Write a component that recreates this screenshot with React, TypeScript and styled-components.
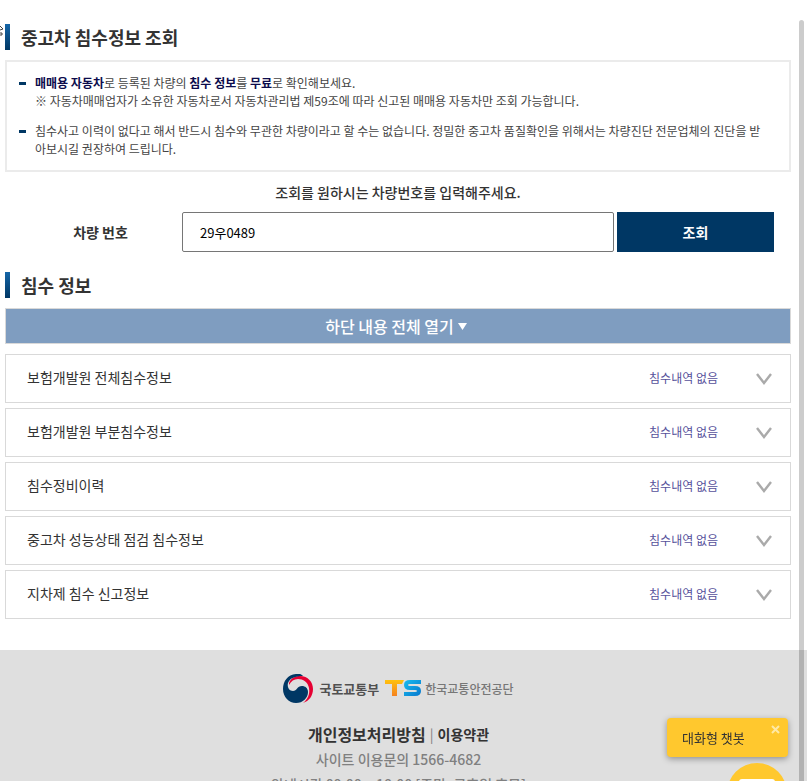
import React, { useState } from 'react';
import styled, { createGlobalStyle } from 'styled-components';

const GlobalStyle = createGlobalStyle`
  * { box-sizing: border-box; }
  html, body, #root { height: 100%; }
  body {
    margin: 0;
    overflow: hidden;
    background: #fff;
    color: #333;
    font-family: "Noto Sans CJK KR", "Noto Sans", sans-serif;
    font-size: 14px;
  }
  button, input { font-family: inherit; }
  h2, p, ul { margin: 0; padding: 0; }
  ul { list-style: none; }
`;

const Page = styled.div`
  height: 100vh;
  overflow: hidden auto;
  scrollbar-width: none;
`;

const Main = styled.main`
  padding: 24px 16px 31px 5px;
`;

const SectionTitle = styled.h2`
  display: flex;
  align-items: center;
  gap: 11px;
  height: 26px;
  font-size: 18px;
  font-weight: 700;
  line-height: 26px;

  &::before {
    content: '';
    width: 5px;
    height: 26px;
    background: linear-gradient(#1566a8, #003764);
  }
`;

const Notice = styled.ul`
  display: flex;
  flex-direction: column;
  gap: 12px;
  margin-top: 10px;
  padding: 12px 20px 12px 12px;
  border: 2px solid #ebebeb;
`;

const NoticeItem = styled.li`
  display: flex;
  gap: 9px;
  color: #444;
  font-size: 12px;
  line-height: 18px;
  word-break: break-all;

  &::before {
    content: '';
    flex: none;
    width: 7px;
    height: 3px;
    margin-top: 8px;
    background: #003764;
  }

  strong {
    color: #0c0c4c;
    font-weight: 700;
  }
`;

const Prompt = styled.p`
  margin-top: 10px;
  font-weight: 500;
  line-height: 20px;
  text-align: center;
`;

const SearchForm = styled.form`
  display: grid;
  grid-template-columns: 174fr 432fr 157fr;
  column-gap: 3px;
  align-items: stretch;
  margin: 10px 17px 20px 0;
  height: 40px;
`;

const SearchLabel = styled.label`
  padding-left: 17px;
  font-weight: 700;
  line-height: 40px;
  text-align: center;
`;

const PlateInput = styled.input`
  min-width: 0;
  padding: 0 17px;
  border: 1px solid #767676;
  border-radius: 2px;
  background: #fff;
  color: #000;
  font-size: 13px;
`;

const SearchButton = styled.button`
  padding: 0;
  border: 0;
  background: #003764;
  color: #fff;
  font-size: 14px;
  font-weight: 700;
`;

const ToggleAll = styled.button`
  display: flex;
  align-items: center;
  justify-content: center;
  gap: 4px;
  width: 100%;
  height: 36px;
  margin: 10px 0;
  padding: 0 4px 0 0;
  border: 1px solid #d9d9d9;
  background: #7f9dc0;
  color: #fff;
  font-size: 16px;
  font-weight: 500;
`;

const HistoryList = styled.ul`
  display: flex;
  flex-direction: column;
  gap: 5px;
`;

const HistoryButton = styled.button`
  display: flex;
  align-items: center;
  width: 100%;
  height: 49px;
  padding: 0 17px 0 21px;
  border: 1px solid #d9d9d9;
  background: #fff;
  color: #333;
  font-size: 14px;
  text-align: left;
`;

const HistoryName = styled.span`
  flex: 1;
  padding-bottom: 4px;
`;

const HistoryStatus = styled.span`
  margin-right: 37px;
  padding-bottom: 2px;
  color: #56519b;
  font-size: 12px;
`;

const HistoryDetail = styled.p`
  padding: 12px 21px;
  border: 1px solid #d9d9d9;
  border-top: 0;
  font-size: 12px;
`;

const Footer = styled.footer`
  display: flex;
  flex-direction: column;
  align-items: center;
  padding: 23px 10px 40px 0;
  background: #dfdfdf;
  color: #808080;
`;

const Logos = styled.div`
  display: flex;
  align-items: center;
  gap: 6px;
  height: 31px;
`;

const Logo = styled.div<{ $main?: boolean }>`
  display: flex;
  align-items: center;
  gap: ${(p) => (p.$main ? 6 : 4)}px;
  color: ${(p) => (p.$main ? '#505050' : '#777')};
  font-size: ${(p) => (p.$main ? 13 : 12)}px;
  font-weight: ${(p) => (p.$main ? 700 : 500)};
`;

const Policies = styled.nav`
  display: flex;
  align-items: center;
  gap: 4px;
  margin-top: 17px;
  line-height: 26px;
`;

const PolicyLink = styled.a<{ $large?: boolean }>`
  color: #333;
  font-size: ${(p) => (p.$large ? 16 : 14)}px;
  font-weight: 700;
  text-decoration: none;
`;

const FooterText = styled.p`
  line-height: 25px;
  font-weight: 500;
`;

const ScrollThumb = styled.div`
  position: fixed;
  top: 20px;
  right: 3px;
  bottom: 0;
  width: 5px;
  border-radius: 3px 3px 0 0;
  background: rgba(0, 0, 0, 0.2);
`;

const ChatTip = styled.div`
  position: fixed;
  right: 19px;
  bottom: 24px;
  display: flex;
  align-items: center;
  width: 121px;
  height: 39px;
  padding-left: 15px;
  border-radius: 4px;
  background: #ffc82e;
  box-shadow: 0 2px 6px rgba(0, 0, 0, 0.35);
  color: #333;
  font-size: 13px;
`;

const ChatClose = styled.button`
  position: absolute;
  top: 6px;
  right: 6px;
  display: flex;
  padding: 0;
  border: 0;
  background: none;
`;

const ChatLauncher = styled.button`
  position: fixed;
  right: 20px;
  bottom: -42px;
  display: flex;
  justify-content: center;
  width: 60px;
  height: 60px;
  padding: 16px 0 0;
  border: 0;
  border-radius: 50%;
  background: #ffc82e;
`;

const Pointer = styled.svg`
  position: fixed;
  top: 24px;
  left: 0;
`;

const histories = [
  '보험개발원 전체침수정보',
  '보험개발원 부분침수정보',
  '침수정비이력',
  '중고차 성능상태 점검 침수정보',
  '지차제 침수 신고정보',
];

const GovernmentMark = () => (
  <svg width="30" height="30" viewBox="0 0 30 30" aria-hidden="true">
    <path d="M6 9C8 4 12 2 17 2C25 2 30 8 30 15C30 22 26 27 20 29C25 25 27 20 26 14C25 8 20 5 15 5C11 5 8 7 6 11Z" fill="#e60033" />
    <path d="M17 0C6-1 0 6 0 15C0 23 6 29 13 29C20 29 25 24 25 18C25 14 22 12 19 12C14 12 14 17 10 17C6 17 4 13 5 9C7 4 12 2 20 2C19 1 18 0 17 0Z" fill="#003764" />
  </svg>
);

const SafetyMark = () => (
  <svg width="36" height="17" viewBox="0 0 36 17" aria-hidden="true">
    <defs>
      <linearGradient id="orange" x1="0" y1="0" x2="0" y2="1">
        <stop stopColor="#ffc20e" />
        <stop offset="1" stopColor="#f58220" />
      </linearGradient>
      <linearGradient id="blue" gradientUnits="userSpaceOnUse" x1="19" y1="0" x2="36" y2="17">
        <stop stopColor="#18bdef" />
        <stop offset="1" stopColor="#0875cc" />
      </linearGradient>
    </defs>
    <path d="M0 0H19L17 4H12V16H7V4H0Z" fill="url(#orange)" />
    <path d="M36 2H25Q21 2 21 5T25 8H30Q34 8 34 11T30 14H19" fill="none" stroke="url(#blue)" strokeWidth="4" />
  </svg>
);

export default function App() {
  const [plate, setPlate] = useState('29우0489');
  const [open, setOpen] = useState<string[]>([]);
  const [tip, setTip] = useState(true);

  const toggle = (name: string) =>
    setOpen((now) => (now.includes(name) ? now.filter((n) => n !== name) : [...now, name]));

  return (
    <>
      <GlobalStyle />
      <Page>
        <Main>
          <SectionTitle>중고차 침수정보 조회</SectionTitle>
          <Notice>
            <NoticeItem>
              <p>
                <strong>매매용 자동차</strong>로 등록된 차량의 <strong>침수 정보</strong>를 <strong>무료</strong>로 확인해보세요.
                <br />※ 자동차매매업자가 소유한 자동차로서 자동차관리법 제59조에 따라 신고된 매매용 자동차만 조회 가능합니다.
              </p>
            </NoticeItem>
            <NoticeItem>
              <p>
                침수사고 이력이 없다고 해서 반드시 침수와 무관한 차량이라고 할 수는 없습니다. 정밀한 중고차 품질확인을 위해서는 차량진단 전문업체의 진단을 받아보시길 권장하여 드립니다.
              </p>
            </NoticeItem>
          </Notice>
          <Prompt>조회를 원하시는 차량번호를 입력해주세요.</Prompt>
          <SearchForm onSubmit={(e) => e.preventDefault()}>
            <SearchLabel htmlFor="plate">차량 번호</SearchLabel>
            <PlateInput id="plate" value={plate} onChange={(e) => setPlate(e.target.value)} />
            <SearchButton type="submit">조회</SearchButton>
          </SearchForm>
          <SectionTitle>침수 정보</SectionTitle>
          <ToggleAll type="button" onClick={() => setOpen(open.length ? [] : histories)}>
            하단 내용 전체 열기
            <svg width="9" height="7" viewBox="0 0 9 7" aria-hidden="true">
              <path d="M0 0H9L4.5 7Z" fill="#fff" />
            </svg>
          </ToggleAll>
          <HistoryList>
            {histories.map((name) => (
              <li key={name}>
                <HistoryButton type="button" aria-expanded={open.includes(name)} onClick={() => toggle(name)}>
                  <HistoryName>{name}</HistoryName>
                  <HistoryStatus>침수내역 없음</HistoryStatus>
                  <svg width="18" height="12" viewBox="0 0 18 12" aria-hidden="true">
                    <path d="M2 1L9 10L16 1" fill="none" stroke="#aaa" strokeWidth="2.4" />
                  </svg>
                </HistoryButton>
                {open.includes(name) && <HistoryDetail>침수내역 없음</HistoryDetail>}
              </li>
            ))}
          </HistoryList>
        </Main>
        <Footer>
          <Logos>
            <Logo $main>
              <GovernmentMark />
              국토교통부
            </Logo>
            <Logo>
              <SafetyMark />
              한국교통안전공단
            </Logo>
          </Logos>
          <Policies>
            <PolicyLink href="#privacy" $large>개인정보처리방침</PolicyLink>
            <span>|</span>
            <PolicyLink href="#terms">이용약관</PolicyLink>
          </Policies>
          <FooterText>사이트 이용문의 1566-4682</FooterText>
          <FooterText>안내시간 09:00 ~ 18:00 [주말, 공휴일 휴무]</FooterText>
        </Footer>
      </Page>
      <ScrollThumb />
      {tip && (
        <ChatTip>
          대화형 챗봇
          <ChatClose type="button" aria-label="닫기" onClick={() => setTip(false)}>
            <svg width="12" height="12" viewBox="0 0 12 12" aria-hidden="true">
              <path d="M2 2L9 9M9 2L2 9" stroke="#ffe9a6" strokeWidth="2" />
            </svg>
          </ChatClose>
        </ChatTip>
      )}
      <ChatLauncher type="button" aria-label="챗봇 열기">
        <svg width="36" height="28" viewBox="0 0 36 28" aria-hidden="true">
          <path d="M3 0H33Q36 0 36 3V20Q36 23 33 23H20L14 28V23H3Q0 23 0 20V3Q0 0 3 0Z" fill="#fff" />
        </svg>
      </ChatLauncher>
      <Pointer width="4" height="14" viewBox="0 0 4 14" aria-hidden="true">
        <path d="M0 2L3 5L0 6M0 9H2V11H0" fill="#fff" stroke="#444" />
      </Pointer>
    </>
  );
}
